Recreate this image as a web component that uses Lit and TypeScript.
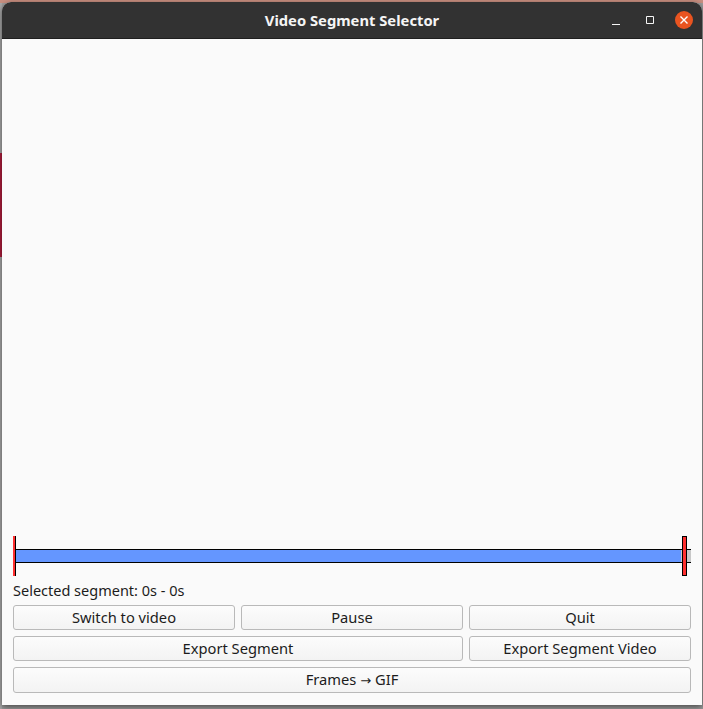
import { LitElement, html, css } from "lit";
import { customElement } from "lit/decorators.js";

@customElement("app-root")
export class AppRoot extends LitElement {
  static styles = css`
    :host {
      display: block;
      width: 703px;
      height: 709px;
      overflow: hidden;
      font-family: "Noto Sans", "Open Sans", sans-serif;
      color: #1c1c1c;
    }

    .desktop {
      box-sizing: border-box;
      height: 709px;
      padding: 2px 1px 4px 2px;
      background:
        linear-gradient(#c98f80, #c98f80) top / 100% 3px no-repeat,
        linear-gradient(
          to bottom,
          #a8a8a8 0 153px,
          #b01c3c 153px 257px,
          #a8a8a8 257px
        ) left / 2px 100% no-repeat,
        #9c9c9c;
    }

    .window {
      box-sizing: border-box;
      height: 703px;
      display: flex;
      flex-direction: column;
      background: #fafafa;
      border-radius: 9px 9px 0 0;
      box-shadow: 0 2px 6px rgba(0, 0, 0, 0.55);
      overflow: hidden;
    }

    .titlebar {
      flex: none;
      height: 37px;
      box-sizing: border-box;
      border-bottom: 1px solid #1f1f1f;
      background: #323232;
      display: flex;
      align-items: center;
      justify-content: center;
      position: relative;
    }

    .title {
      color: #f5f5f5;
      font-size: 14.75px;
      font-weight: 700;
    }

    .controls {
      position: absolute;
      right: 9px;
      top: 9px;
      display: flex;
      align-items: center;
      gap: 14px;
    }

    .controls svg {
      display: block;
    }

    .body {
      flex: 1;
      display: flex;
      flex-direction: column;
      padding: 0 11px 13px;
      min-height: 0;
    }

    .video {
      flex: 1;
    }

    .timeline {
      flex: none;
      height: 40px;
      position: relative;
      display: flex;
      align-items: center;
    }

    .track {
      box-sizing: border-box;
      width: 100%;
      height: 14px;
      background: #c8c8c8;
      border-top: 1px solid #000;
      border-bottom: 1px solid #000;
    }

    .fill {
      height: 100%;
      background: #6496ff;
    }

    .handle {
      position: absolute;
      top: 0;
      bottom: 0;
      box-sizing: border-box;
      background: #ff3030;
      border: 1px solid #000;
    }

    .handle.start {
      left: 0;
      width: 3px;
      border-width: 0 1px 0 0;
    }

    .handle.end {
      left: 669px;
      width: 5px;
    }

    .status {
      box-sizing: border-box;
      flex: none;
      height: 29px;
      padding-bottom: 2px;
      display: flex;
      align-items: center;
      font-size: 14.5px;
    }

    .buttons {
      display: grid;
      grid-template-columns: repeat(3, 1fr);
      grid-auto-rows: 25px;
      gap: 6px;
    }

    button {
      font: inherit;
      font-size: 14.7px;
      color: inherit;
      padding: 0 0 2px;
      border: 1px solid #b9b9b9;
      border-radius: 3px;
      background: linear-gradient(#fcfcfc, #f3f3f3);
    }

    .wide {
      grid-column: span 2;
    }

    .full {
      grid-column: span 3;
      height: 26px;
    }

    .arrow {
      font-family: "DejaVu Sans", sans-serif;
      font-size: 13px;
    }
  `;

  render() {
    return html`
      <div class="desktop">
        <div class="window">
          <header class="titlebar">
            <span class="title">Video Segment Selector</span>
            <div class="controls">
              <svg width="18" height="18" viewBox="0 0 18 18">
                <path d="M1 13.5h8" stroke="#f5f5f5" stroke-width="1" fill="none" />
              </svg>
              <svg width="18" height="18" viewBox="0 0 18 18">
                <path d="M3.5 5.5h7v7h-7z" stroke="#f5f5f5" stroke-width="1" fill="none" />
              </svg>
              <svg width="18" height="18" viewBox="0 0 18 18">
                <circle cx="9" cy="9" r="9" fill="#e95420" />
                <path d="M5.5 5.5l7 7M12.5 5.5l-7 7" stroke="#fff" stroke-width="1.4" fill="none" />
              </svg>
            </div>
          </header>
          <main class="body">
            <div class="video"></div>
            <div class="timeline">
              <div class="track">
                <div class="fill" style="width: 98.5%"></div>
              </div>
              <div class="handle start"></div>
              <div class="handle end"></div>
            </div>
            <div class="status">Selected segment: 0s - 0s</div>
            <div class="buttons">
              <button>Switch to video</button>
              <button>Pause</button>
              <button>Quit</button>
              <button class="wide">Export Segment</button>
              <button>Export Segment Video</button>
              <button class="full">Frames <span class="arrow">→</span> GIF</button>
            </div>
          </main>
        </div>
      </div>
    `;
  }
}
